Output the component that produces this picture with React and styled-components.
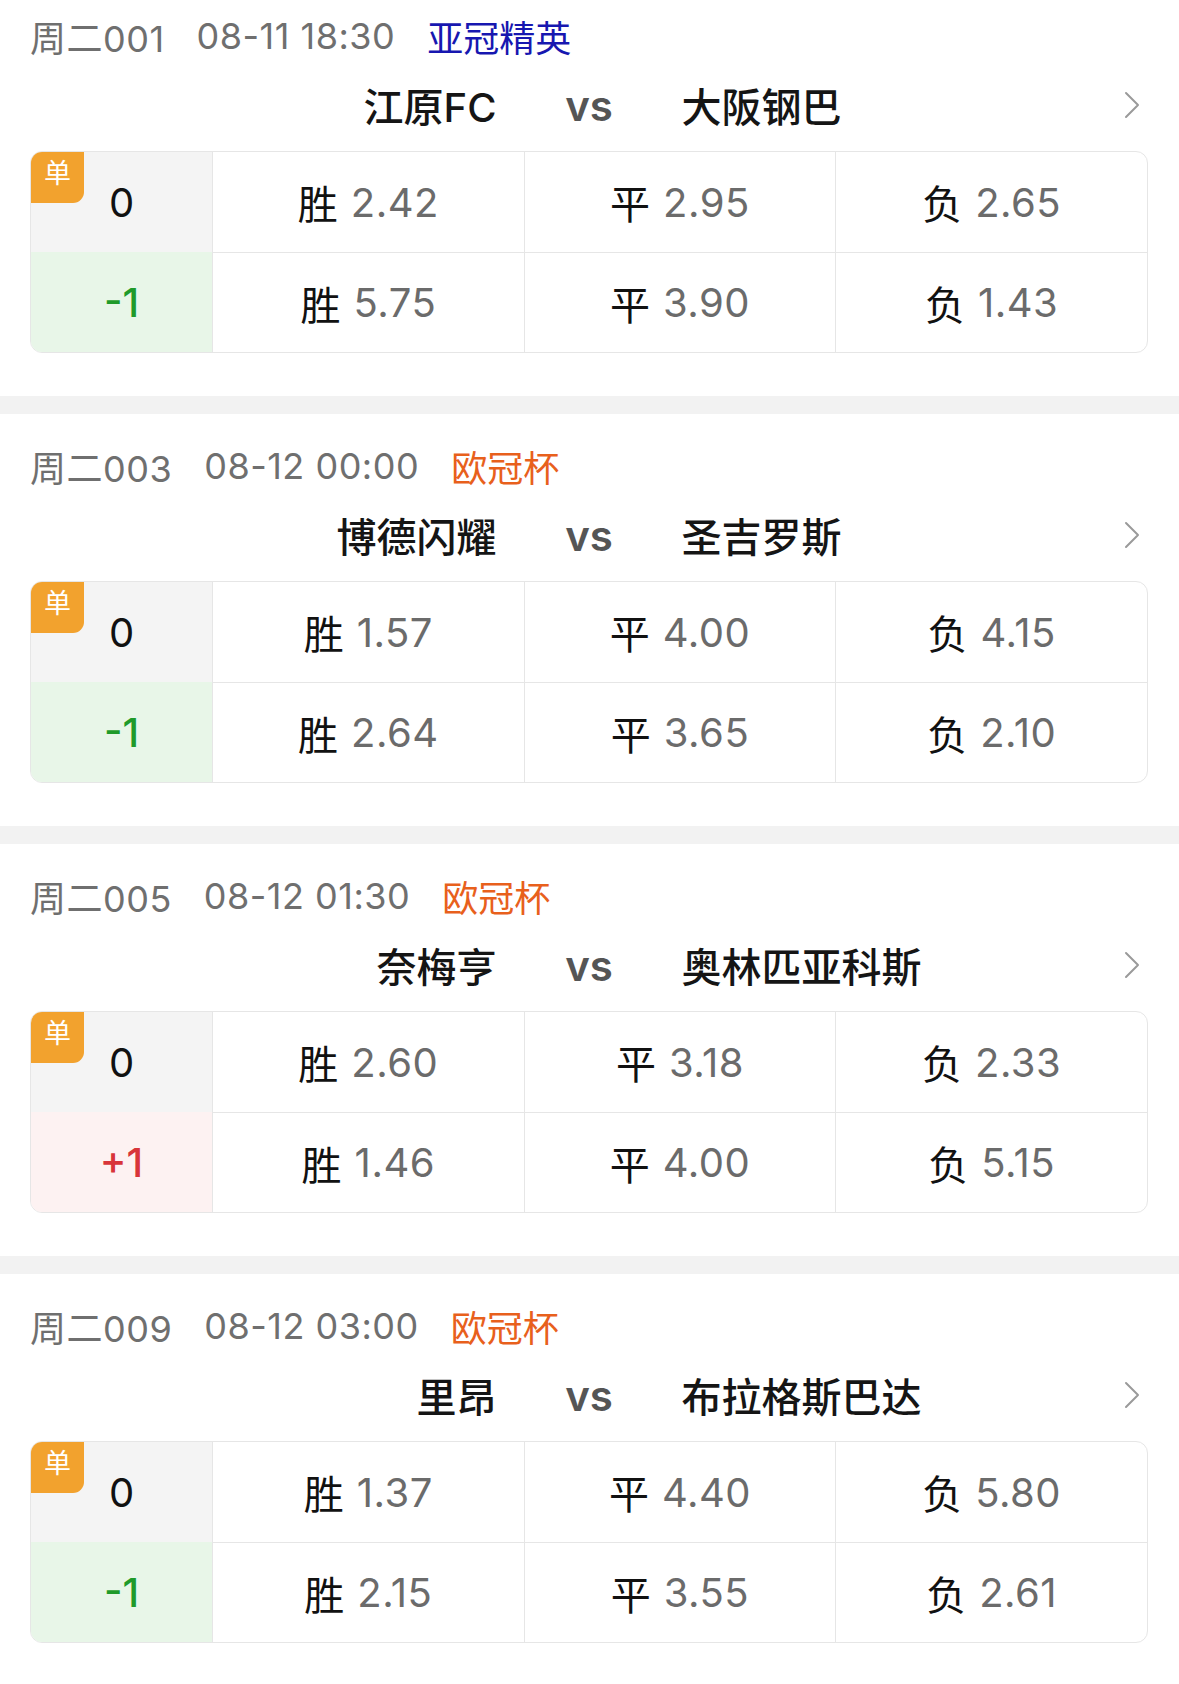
import React from 'react'
import styled, { createGlobalStyle } from 'styled-components'

const GlobalStyle = createGlobalStyle`
  body {
    margin: 0;
    background: #fff;
    font-family: Inter, "Noto Sans CJK SC", sans-serif;
    -webkit-font-smoothing: antialiased;
  }
`

const matches = [
  {
    code: '周二001', time: '08-11 18:30', league: '亚冠精英', leagueColor: '#1717b0',
    home: '江原FC', away: '大阪钢巴',
    rows: [
      { handicap: '0', odds: ['2.42', '2.95', '2.65'] },
      { handicap: '-1', odds: ['5.75', '3.90', '1.43'] }
    ]
  },
  {
    code: '周二003', time: '08-12 00:00', league: '欧冠杯', leagueColor: '#e8601c',
    home: '博德闪耀', away: '圣吉罗斯',
    rows: [
      { handicap: '0', odds: ['1.57', '4.00', '4.15'] },
      { handicap: '-1', odds: ['2.64', '3.65', '2.10'] }
    ]
  },
  {
    code: '周二005', time: '08-12 01:30', league: '欧冠杯', leagueColor: '#e8601c',
    home: '奈梅亨', away: '奥林匹亚科斯',
    rows: [
      { handicap: '0', odds: ['2.60', '3.18', '2.33'] },
      { handicap: '+1', odds: ['1.46', '4.00', '5.15'] }
    ]
  },
  {
    code: '周二009', time: '08-12 03:00', league: '欧冠杯', leagueColor: '#e8601c',
    home: '里昂', away: '布拉格斯巴达',
    rows: [
      { handicap: '0', odds: ['1.37', '4.40', '5.80'] },
      { handicap: '-1', odds: ['2.15', '3.55', '2.61'] }
    ]
  }
]

const labels = ['胜', '平', '负']

const Section = styled.section`
  padding: 22px 31px 43px 30px;

  &:first-child {
    padding-top: 6px;
  }

  & + & {
    border-top: 18px solid #f2f2f2;
  }
`

const MetaRow = styled.div`
  height: 60px;
  display: flex;
  align-items: center;
  gap: 32px;
  font-size: 36px;
  letter-spacing: 0.5px;
  color: #6f6f6f;
`

const League = styled.span`
  color: ${props => props.color};
  letter-spacing: 0;
`

const Teams = styled.div`
  height: 78px;
  margin-bottom: 2px;
  display: grid;
  grid-template-columns: 1fr 185px 1fr;
  align-items: center;
  font-size: 40px;
  font-weight: 500;
  color: #151515;
`

const Home = styled.div`
  text-align: right;
`

const Vs = styled.div`
  text-align: center;
  color: #555;
  font-size: 42px;
  font-weight: 600;
`

const Away = styled.div`
  display: flex;
  align-items: center;
  justify-content: space-between;
  padding-right: 8px;
`

const Chevron = styled.svg`
  width: 16px;
  height: 28px;
`

const Table = styled.div`
  position: relative;
  margin-top: 7px;
  border: 1px solid #e6e6e6;
  border-radius: 12px;
  overflow: hidden;
  display: grid;
  grid-template-columns: 181px repeat(3, 1fr);
  grid-auto-rows: 100px;
`

const handicapTone = {
  zero: { bg: '#f4f4f4', color: '#111' },
  minus: { bg: '#e8f6e8', color: '#1f9a2a' },
  plus: { bg: '#fdf2f2', color: '#d8353a' }
}

const HandicapCell = styled.div`
  display: flex;
  align-items: center;
  justify-content: center;
  font-size: 40px;
  font-weight: ${props => props.tone === 'zero' ? 400 : 500};
  background: ${props => handicapTone[props.tone].bg};
  color: ${props => handicapTone[props.tone].color};
  ${props => props.second && 'border-top: 1px solid transparent;'}
`

const OddsCell = styled.div`
  display: flex;
  align-items: center;
  justify-content: center;
  gap: 13px;
  font-size: 40px;
  border-left: 1px solid #e6e6e6;
  ${props => props.second && 'border-top: 1px solid #e6e6e6;'}
`

const Label = styled.span`
  color: #111;
`

const Odd = styled.span`
  color: #6b6b6b;
  letter-spacing: 0.5px;
`

const Badge = styled.div`
  position: absolute;
  top: 0;
  left: 0;
  width: 53px;
  height: 51px;
  background: #f2a22e;
  border-bottom-right-radius: 11px;
  color: #fff;
  font-size: 27px;
  display: flex;
  justify-content: center;
  padding-top: 6px;
  box-sizing: border-box;
  line-height: 1.2;
`

const toneOf = h => h === '0' ? 'zero' : h.startsWith('+') ? 'plus' : 'minus'

function MatchCard({ match }) {
  return (
    <Section>
      <MetaRow>
        <span>{match.code}</span>
        <span>{match.time}</span>
        <League color={match.leagueColor}>{match.league}</League>
      </MetaRow>
      <Teams>
        <Home>{match.home}</Home>
        <Vs>vs</Vs>
        <Away>
          <span>{match.away}</span>
          <Chevron viewBox="0 0 16 28">
            <path d="M2 2 L14 14 L2 26" fill="none" stroke="#9a9a9a" strokeWidth="2" strokeLinecap="round" strokeLinejoin="round" />
          </Chevron>
        </Away>
      </Teams>
      <Table>
        <Badge>单</Badge>
        {match.rows.map((row, i) => (
          <React.Fragment key={i}>
            <HandicapCell tone={toneOf(row.handicap)} second={i > 0}>{row.handicap}</HandicapCell>
            {row.odds.map((odd, j) => (
              <OddsCell key={j} second={i > 0}>
                <Label>{labels[j]}</Label>
                <Odd>{odd}</Odd>
              </OddsCell>
            ))}
          </React.Fragment>
        ))}
      </Table>
    </Section>
  )
}

export default function App() {
  return (
    <>
      <GlobalStyle />
      <main>
        {matches.map(m => <MatchCard key={m.code} match={m} />)}
      </main>
    </>
  )
}
